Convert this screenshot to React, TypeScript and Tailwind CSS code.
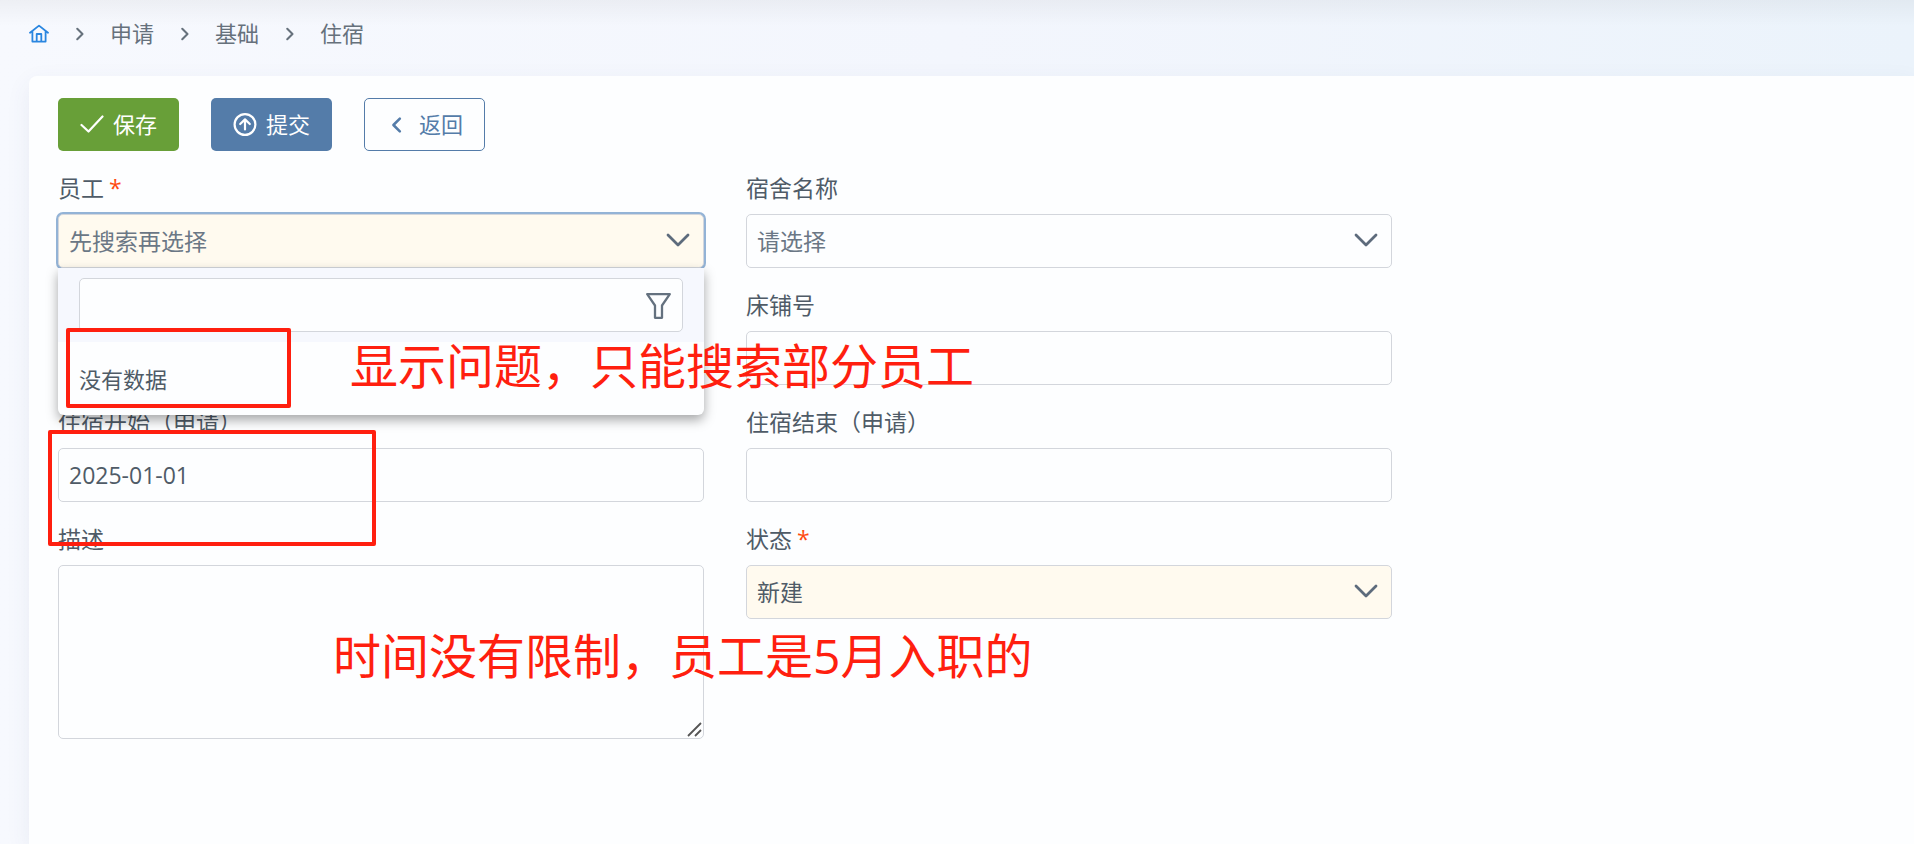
import React, { useState } from 'react';

const sans = "font-['Open_Sans','Noto_Sans_CJK_SC',sans-serif]";
const field = 'block h-[54px] w-full rounded-[5px] border border-[#d3d6dc] px-[10px] text-[23px] outline-none';
const button = 'flex h-[53px] w-[121px] items-center justify-center gap-[9px] rounded-[5px]';

function HomeIcon() {
  return (
    <svg className="h-[19px] w-[20px]" viewBox="0 0 20 19" fill="none" stroke="currentColor" strokeWidth="1.8" strokeLinecap="round" strokeLinejoin="round">
      <path d="M1 8.8 10 1.6l9 7.2M3.4 7.2v10.4h13.2V7.2M7.7 17.4V10h4.6v7.4" />
    </svg>
  );
}

function Chevron({ className, d }: { className: string; d: string }) {
  return (
    <svg className={className} viewBox="0 0 24 24" fill="none" stroke="currentColor" strokeWidth="2.8" strokeLinecap="round" strokeLinejoin="round">
      <path d={d} />
    </svg>
  );
}

const DOWN = 'M2 7l10 10L22 7';
const RIGHT = 'M9 5l7 7-7 7';
const LEFT = 'M14 5l-7 7 7 7';

function Label({ htmlFor, required, children }: { htmlFor: string; required?: boolean; children: React.ReactNode }) {
  return (
    <label htmlFor={htmlFor} className="mb-[12px] block text-[23px] leading-[28px]">
      {children}
      {required && <span className="ml-[5px] text-[#ff4a0f]">*</span>}
    </label>
  );
}

function SelectField({ id, value, className, textClass }: { id: string; value: string; className: string; textClass: string }) {
  return (
    <div className="relative">
      <select id={id} className={`${field} appearance-none ${className} ${textClass}`}>
        <option>{value}</option>
      </select>
      <Chevron className="pointer-events-none absolute top-[14px] right-[14px] h-[24px] w-[24px] text-[#5d6b7c]" d={DOWN} />
    </div>
  );
}

export default function App() {
  const [start, setStart] = useState('2025-01-01');
  const [keyword, setKeyword] = useState('');

  return (
    <div className={`${sans} relative flex min-h-screen flex-col overflow-hidden bg-linear-to-r from-[#f7f9fe] via-[#f3f6fd] to-[#ebf3fb] pl-[29px] text-[#4f5b67]`}>
      <div className="pointer-events-none absolute inset-x-0 top-0 h-[26px] bg-linear-to-b from-black/4 to-transparent" />

      <nav className="flex h-[76px] items-start pt-[17px] text-[22px] leading-[32px] text-[#66717c]">
        <a href="#" aria-label="首页" className="mt-[7px] text-[#2a86e0]">
          <HomeIcon />
        </a>
        {['申请', '基础', '住宿'].map((item) => (
          <React.Fragment key={item}>
            <Chevron className="mx-[21px] mt-[8px] h-[18px] w-[19px]" d={RIGHT} />
            <a href="#">{item}</a>
          </React.Fragment>
        ))}
      </nav>

      <main className="flex-1 rounded-tl-[8px] bg-[#fdfeff] px-[29px] pt-[22px] shadow-[0_8px_24px_rgba(60,80,130,0.08)]">
        <div className="flex gap-[32px] text-[22px]">
          <button className={`${button} bg-[#689f38] text-white`}>
            <svg className="h-[24px] w-[24px]" viewBox="0 0 24 24" fill="none" stroke="currentColor" strokeWidth="2.2" strokeLinecap="round" strokeLinejoin="round">
              <path d="M1.5 12l7 6.5L22.5 3.5" />
            </svg>
            保存
          </button>
          <button className={`${button} bg-[#547ca9] text-white`}>
            <svg className="h-[24px] w-[24px]" viewBox="0 0 24 24" fill="none" stroke="currentColor" strokeWidth="2.2" strokeLinecap="round" strokeLinejoin="round">
              <circle cx="12" cy="11.5" r="10.4" />
              <path d="M12 16.5V6.8M7.2 11l4.8-4.6 4.8 4.6" />
            </svg>
            提交
          </button>
          <button className={`${button} border border-[#547ca9] text-[#547ca9]`}>
            <Chevron className="h-[22px] w-[24px]" d={LEFT} />
            返回
          </button>
        </div>

        <form className="mt-[23px] grid w-full max-w-[1334px] grid-cols-2 gap-x-[42px] gap-y-[23px]">
          <div>
            <Label htmlFor="employee" required>员工</Label>
            <div className="relative">
              <SelectField id="employee" value="先搜索再选择" className="border-[#547ca9] bg-[#fffaef] shadow-[0_0_0_2px_#93b3d6]" textClass="text-[#6b7785]" />
              <div className="absolute inset-x-0 top-full z-10 h-[147px] rounded-b-[6px] bg-[#fdfeff] shadow-[0_5px_12px_rgba(0,0,0,0.35)]">
                <div className="relative bg-[#f6f8fe] px-[21px] py-[10px]">
                  <input aria-label="搜索" value={keyword} onChange={(e) => setKeyword(e.target.value)} className={`${field} bg-[#fdfeff]`} />
                  <svg className="pointer-events-none absolute top-[25px] right-[33px] h-[26px] w-[25px] text-[#64717f]" viewBox="0 0 25 26" fill="none" stroke="currentColor" strokeWidth="2.3" strokeLinejoin="round">
                    <path d="M1.2 1.2h22.6L16 12.5V24.8H9V12.5z" />
                  </svg>
                </div>
                <div className="px-[21px] pt-[21px] text-[22px] leading-[32px]">没有数据</div>
              </div>
            </div>
          </div>

          <div>
            <Label htmlFor="dorm">宿舍名称</Label>
            <SelectField id="dorm" value="请选择" className="bg-[#fdfeff]" textClass="text-[#6b7785]" />
          </div>

          <div />

          <div>
            <Label htmlFor="bed">床铺号</Label>
            <input id="bed" className={field} />
          </div>

          <div>
            <Label htmlFor="start">住宿开始（申请）</Label>
            <input id="start" value={start} onChange={(e) => setStart(e.target.value)} className={field} />
          </div>

          <div>
            <Label htmlFor="end">住宿结束（申请）</Label>
            <input id="end" className={field} />
          </div>

          <div>
            <Label htmlFor="remark">描述</Label>
            <div className="relative">
              <textarea id="remark" className="block h-[174px] w-full resize-none rounded-[5px] border border-[#d3d6dc] px-[10px] py-[8px] text-[23px] outline-none" />
              <svg className="pointer-events-none absolute right-[2px] bottom-[2px] h-[15px] w-[15px] text-[#555]" viewBox="0 0 15 15" fill="none" stroke="currentColor" strokeWidth="1.8">
                <path d="M1 14L14 1M8 14l6-6" />
              </svg>
            </div>
          </div>

          <div>
            <Label htmlFor="status" required>状态</Label>
            <SelectField id="status" value="新建" className="bg-[#fffaef]" textClass="text-[#4f5b67]" />
          </div>
        </form>
      </main>

      {/* review marks on top of the form */}
      <div className="pointer-events-none absolute inset-0 z-20 text-[48px] leading-[56px] whitespace-nowrap text-[#ff1f0f]">
        <div className="absolute top-[328px] left-[66px] h-[80px] w-[225px] rounded-[2px] border-4 border-[#ff1f0f]" />
        <div className="absolute top-[430px] left-[48px] h-[116px] w-[328px] rounded-[2px] border-4 border-[#ff1f0f]" />
        <p className="absolute top-[338px] left-[350px]">显示问题，只能搜索部分员工</p>
        <p className="absolute top-[628px] left-[333px]">时间没有限制，员工是5月入职的</p>
      </div>
    </div>
  );
}
